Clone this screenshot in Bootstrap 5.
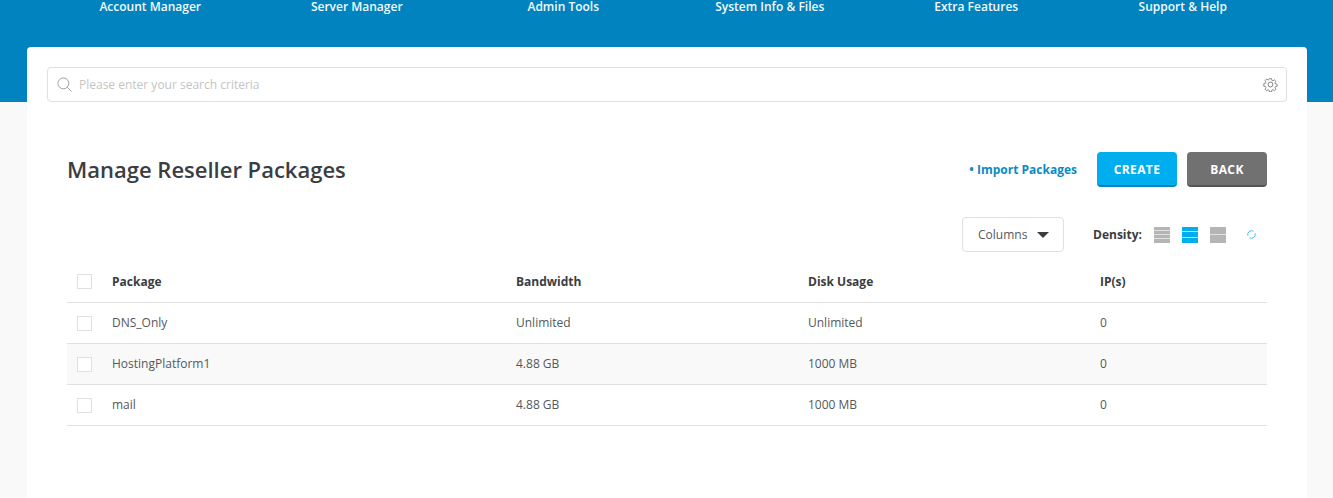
<!DOCTYPE html>
<html lang="en">
<head>
<meta charset="utf-8">
<title>Manage Reseller Packages</title>
<link href="https://cdn.jsdelivr.net/npm/bootstrap@5.3.0/dist/css/bootstrap.min.css" rel="stylesheet">
<style>
html,body{height:498px;overflow:hidden}
body{background:#f9f9f9;font-family:"Open Sans","Noto Sans",sans-serif;font-size:12px;color:#55585b}
.topband{background:#0083bf;height:102px;padding:0 47px}
.topnav{line-height:13px}
.topnav a{flex:1 1 0;text-align:center;color:#f4fafd;text-decoration:none;font-size:12px;font-weight:600}
.sheet{background:#fff;margin:-55px 26px 0 27px;height:460px;border-radius:4px 4px 0 0;padding:20px}
.searchbox{height:35px;border:1px solid #e0e0e0;border-radius:4px;background:#fff;padding:0 8px 0 9px}
.searchbox input{border:0;outline:0;flex:1;padding:0;font-size:12px;color:#444;background:transparent;font-family:inherit}
.searchbox input::placeholder{color:#c4c4c4;opacity:1}
.searchicon{margin-right:7px}
.inner{padding:0 20px}
.titlebar{margin-top:50px;height:35px}
.pagetitle{font-size:22px;font-weight:600;color:#3a3e42;margin:0;line-height:35px}
.importlink{color:#0a8bc6;font-weight:700;text-decoration:none;font-size:12px;margin-right:20px}
.actbtn{width:80px;height:35px;border:0;border-radius:4px;color:#fff;font-weight:700;font-size:12px;letter-spacing:.4px;padding:0;line-height:35px}
.actcreate{background:#00aeef;border-bottom:2px solid #0083bf}
.actback{background:#717171;border-bottom:2px solid #555;margin-left:10px}
.actcreate:hover{background:#00aeef;color:#fff}.actback:hover{background:#717171;color:#fff}
.tools{margin-top:30px;height:35px}
.colbtn{width:102px;height:35px;border:1px solid #e0e0e0;border-radius:4px;background:#fff;color:#55585b;font-size:12px;padding:0 14px 0 15px}
.caret-down{width:0;height:0;border-left:6px solid transparent;border-right:6px solid transparent;border-top:6px solid #3a3d40}
.densitylabel{font-weight:700;color:#3a3d40;margin:0 12px 0 29px}
.densbar{display:flex;flex-direction:column;width:16px;height:16px;margin-right:12px;background:#e2e2e2}
.densbar i{display:block;flex:1;background:#b5b5b5}
.densbar i+i{margin-top:1px}
.densbar.on{background:#bfe9fa}
.densbar.on i{background:#00aeef}
.refreshicon{margin:0 11px 0 9px}
.pkgtable{margin:0;margin-top:10px;width:1200px;table-layout:fixed;border-collapse:collapse}
.pkgtable th,.pkgtable td{height:41px;padding:0;vertical-align:middle;border-bottom:1px solid #e0e0e0;font-size:12px;color:#55585b;box-shadow:none;background:transparent}
.pkgtable th{height:40px;font-weight:700;color:#3a3d40}
.pkgtable tr.shade td{background:#f9f9f9}
.cellbox{display:block;width:15px;height:15px;border:1px solid #e0e0e0;background:#fff;margin-left:10px}
.pkgtable td .cellbox{margin-top:1px}
</style>
</head>
<body>
<div class="topband">
  <nav class="topnav d-flex">
    <a href="#">Account Manager</a><a href="#">Server Manager</a><a href="#">Admin Tools</a><a href="#">System Info &amp; Files</a><a href="#">Extra Features</a><a href="#">Support &amp; Help</a>
  </nav>
</div>
<main class="sheet">
  <div class="searchbox d-flex align-items-center">
    <svg width="15" height="15" viewBox="0 0 16 16" fill="none" stroke="#999" stroke-width="1" class="searchicon flex-shrink-0"><circle cx="6.8" cy="6.8" r="5.8"/><path d="M10.9 10.9 15.5 15.5"/></svg>
    <input type="text" placeholder="Please enter your search criteria">
    <svg width="15" height="15" viewBox="0 0 16 16" fill="none" stroke="#777" stroke-width="1"><circle cx="8" cy="8" r="2.6"/><path d="M6.8 1h2.4l.4 2 1.3.6 1.8-1.1 1.7 1.7-1.1 1.8.6 1.3 2 .4v2.4l-2 .4-.6 1.3 1.1 1.8-1.7 1.7-1.8-1.1-1.3.6-.4 2H6.8l-.4-2-1.3-.6-1.8 1.1-1.7-1.7 1.1-1.8-.6-1.3-2-.4V6.8l2-.4.6-1.3-1.1-1.8 1.7-1.7 1.8 1.1 1.3-.6z" transform="translate(.8 .8) scale(.9)"/></svg>
  </div>
  <div class="inner">
    <div class="titlebar d-flex align-items-center">
      <h1 class="pagetitle me-auto">Manage Reseller Packages</h1>
      <a class="importlink" href="#">• Import Packages</a>
      <button class="btn actbtn actcreate" type="button">CREATE</button>
      <button class="btn actbtn actback" type="button">BACK</button>
    </div>
    <div class="tools d-flex align-items-center justify-content-end">
      <button class="colbtn d-flex align-items-center justify-content-between" type="button">Columns <span class="caret-down"></span></button>
      <span class="densitylabel">Density:</span>
      <span class="densbar"><i></i><i></i><i></i><i></i></span>
      <span class="densbar on"><i></i><i></i><i></i></span>
      <span class="densbar"><i></i><i></i></span>
      <svg width="9" height="11" viewBox="0 0 12 14" fill="none" stroke="#2fb4ea" stroke-width="1.2" class="refreshicon"><path d="M1.2 8.5A5 5 0 0 1 8.5 2.7"/><path d="M10.8 5.5A5 5 0 0 1 3.5 11.3"/></svg>
    </div>
    <table class="table pkgtable">
      <colgroup><col style="width:45px"><col style="width:404px"><col style="width:292px"><col style="width:292px"><col></colgroup>
      <thead><tr><th><span class="cellbox"></span></th><th>Package</th><th>Bandwidth</th><th>Disk Usage</th><th>IP(s)</th></tr></thead>
      <tbody>
        <tr><td><span class="cellbox"></span></td><td>DNS_Only</td><td>Unlimited</td><td>Unlimited</td><td>0</td></tr>
        <tr class="shade"><td><span class="cellbox"></span></td><td>HostingPlatform1</td><td>4.88 GB</td><td>1000 MB</td><td>0</td></tr>
        <tr><td><span class="cellbox"></span></td><td>mail</td><td>4.88 GB</td><td>1000 MB</td><td>0</td></tr>
      </tbody>
    </table>
  </div>
</main>
</body>
</html>
